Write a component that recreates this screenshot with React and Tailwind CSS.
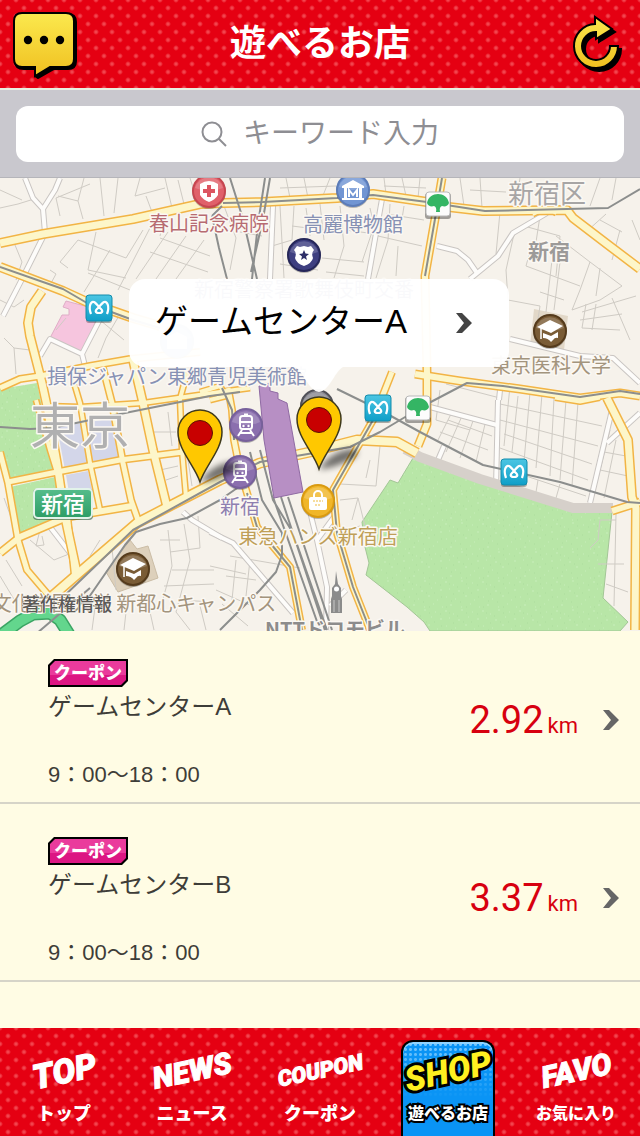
import React, { useState } from "react";

const shops = [
    { id: 1, name: "ゲームセンターA", hours: "9：00〜18：00", distance: "2.92" },
    { id: 2, name: "ゲームセンターB", hours: "9：00〜18：00", distance: "3.37" },
];

const tabs = [
    { id: "top", title: "TOP", label: "トップ", titleSize: "text-[34px]", labelSize: "text-[18px]" },
    { id: "news", title: "NEWS", label: "ニュース", titleSize: "text-[30px]", labelSize: "text-[18px]" },
    { id: "coupon", title: "COUPON", label: "クーポン", titleSize: "text-[22px]", labelSize: "text-[18px]" },
    { id: "shop", title: "SHOP", label: "遊べるお店", titleSize: "text-[34px]", labelSize: "text-[16px]" },
    { id: "favo", title: "FAVO", label: "お気に入り", titleSize: "text-[30px]", labelSize: "text-[16px]" },
];

// thin streets
const lanes = [
    "M0 208L18 204L34 199M58 196L78 201L83 219M84 178L78 201M60 216L56 198L90 184M0 190L22 200M100 178L104 216M118 178L114 213M140 178L135 196L165 188M146 196L152 212M165 178L172 208M178 180L184 204M190 178L197 200",
    "M96 232L88 270L126 278M78 240L126 258L143 230M78 240L60 262L68 268M50 270L56 274L50 285M88 273L130 290M110 250L84 292M150 228L118 290M168 232L136 279M186 236L156 279M204 240L176 279M160 238L210 256M150 252L208 272M166 210L160 236M15 245L22 262L16 280",
    "M0 300L14 307L24 300M4 338L14 348L30 350M14 348L16 374M110 300L100 320L124 340M120 314L106 338L98 358M56 330L66 318",
    "M224 206L236 238L230 270M240 232L262 236M280 206L284 278M294 206L292 240L272 246M306 208L310 236M320 204L324 240M340 206L344 246L334 278M292 226L340 232M322 258L364 262M326 272L364 276M370 208L374 226L362 262M345 230L376 234M390 204L388 240L376 278M404 206L400 232M386 214L424 220M378 236L422 246M398 246L396 276M280 264L318 270",
    "M286 178L290 198M304 178L308 198M330 178L322 198M384 178L386 194M402 178L406 196M420 178L418 198M280 188L336 186M384 186L426 188M460 178L464 206M480 178L482 208M520 178L516 206M600 178L590 206M616 178L612 200M470 190L506 192",
    "M500 212L496 254M514 234L506 270L508 300M524 226L560 236L556 276M540 216L536 242M556 236L590 262L622 286M590 262L580 290L572 310M526 266L580 286M532 244L526 266M552 260L546 312M560 262L554 310M540 292L564 300M600 268L596 296M622 286L600 300L572 310M508 300L540 306L535 338M586 304L582 328M596 304L592 330M582 312L636 296M580 320L622 314M582 328L620 330M612 298L630 340M620 230L612 260M632 220L640 240M586 232L606 214M600 220L622 232",
    "M440 390L436 420L470 430M446 384L500 398M452 412L438 440M462 416L446 452M474 418L460 458M486 420L476 462M448 420L492 436M440 432L488 450M510 386L504 446M518 396L512 452M530 392L524 462M542 394L536 468M554 398L550 476M566 400L560 480M578 402L572 486M500 404L602 426M500 420L598 446M504 434L592 464M500 448L588 480M526 476L586 496M536 492L538 480M556 498L560 484M610 430L592 502M616 440L604 498M604 452L626 456M600 470L628 476M616 514L614 606M616 520L600 520L598 540L590 548M598 564L624 564M606 584L628 592",
    "M380 446L376 486L340 484M340 500L358 498L352 520M370 460L366 478M358 498L366 530M346 530L360 526M230 556L300 568M226 576L256 580M236 560L232 600M250 560L246 596M210 566L246 574M216 590L252 606M222 604L248 626",
    "M154 432L176 432M156 446L160 470L178 466M168 412L172 446M190 420L196 446M166 480L178 476M188 460L192 486M40 530L36 546L44 545L42 536M30 540L54 560L74 552M12 520L4 498M6 560L22 586M0 576L18 606M100 540L90 556M112 548L116 590M160 540L180 540M168 530L172 566L160 610M184 524L190 560L176 612M198 516L200 548L170 552M172 570L214 570M164 586L214 584M178 600L214 602M126 612L124 630M150 612L154 630M176 612L190 630M200 606L206 630M96 600L92 630",
];

// white streets with a grey edge
const streets = [
    "M25 178L33 198L43 209L45 233L20 283L3 316",
    "M60 178L55 190L43 209",
    "M40 356L50 339L82 354L100 319M82 354L85 366",
    "M273 206L270 279",
    "M382 199L368 279",
    "M547 213L513 233L498 256L470 279",
    "M437 246L457 251L468 260L477 273",
    "M510 339L580 356L613 358L640 383",
    "M498 400L496 488",
    "M430 407L497 425",
    "M612 410L590 503",
    "M640 413L607 443",
    "M438 460L444 446",
    "M210 532L233 543L293 613",
    "M308 500L312 520L317 540L327 587L326 630M337 513L317 540",
    "M346 590L330 606",
    "M500 390L499 400",
    "M50 527L74 558",
    "M183 512L192 520L222 538",
];

const roads = [
    { d: "M0 243L43 234L133 219L200 204L223 203L263 202L337 198L373 194L427 202L440 206L483 211L567 210L573 218L607 244L640 269", w: 7 },
    { d: "M0 267L63 291L87 302L133 318L160 326", w: 7 },
    { d: "M42 291L31 307L28 323L30 336L42 383L47 406L57 463L65 517L77 573", w: 7 },
    { d: "M0 388L20 379L40 376L90 366L130 359L200 352", w: 5 },
    { d: "M72 376L80 403L90 463L100 510", w: 4 },
    { d: "M103 368L112 403L123 463L131 500L138 520", w: 5 },
    { d: "M133 360L143 403L153 450L167 507", w: 7 },
    { d: "M187 373L180 399L182 450L186 497", w: 4 },
    { d: "M46 406L80 407L143 403L220 392L250 388", w: 4 },
    { d: "M8 482L57 472L120 460L183 452", w: 5 },
    { d: "M0 553L20 537L67 517L132 506", w: 6 },
    { d: "M0 452L8 483L18 540L27 570L50 597", w: 5 },
    { d: "M36 400L50 450L58 476L68 517L74 575", w: 4 },
    { d: "M50 598L80 572L137 523L187 497L220 480L260 463L310 452L357 440L397 442L417 453", w: 8 },
    { d: "M228 388L232 410L234 440L240 470L247 493L257 527L290 567L302 630", w: 5 },
    { d: "M392 372L373 420L333 490L337 533L353 587L370 630", w: 5 },
    { d: "M442 178L435 219L425 276L427 373L427 406L427 424L418 446", w: 6 },
    { d: "M415 374L460 381L520 389L580 398L620 393L640 396", w: 6 },
    { d: "M607 398L628 440L632 497L636 508L635 630", w: 7 },
    { d: "M612 511L640 502", w: 6 },
    { d: "M533 215L546 208L556 214", w: 2 },
    { d: "M200 392L220 386L226 396L210 400", w: 4 },
    { d: "M555 398L580 402L600 398", w: 3 },
];

const rails = [
    "M223 203L263 202L337 198L373 195L427 202L485 211L567 209L608 208L640 189",
    "M0 267L63 289L87 303L133 320L160 328",
    "M0 427L30 429L52 428L100 418L150 408L210 396L240 392",
    "M60 600L133 530L220 482L260 462L350 447L380 432L427 404L467 383L503 386L580 397L620 391L640 394",
    "M87 600L125 545L136 532L160 524L187 518L220 500L240 486",
    "M36 634L90 588",
    "M230 178L243 219L257 279M270 178L263 219L251 272M265 178L258 224L252 279M212 216L219 248L227 279M212 216L222 206",
    "M337 389L380 410L420 432L483 465L560 482L627 502L640 503",
    "M442 178L435 219L425 276",
    "M260 450L273 500L293 533L327 630M273 497L320 630M281 497L325 630M288 497L332 630",
    "M250 452L262 500L282 533L282 555L276 572L260 590L220 630",
    "M247 493L257 527L290 567L302 630",
    "M384 400L373 420L333 490L337 533L353 587L370 630",
    "M222 388L232 410L234 440",
];

const labels = [
    { text: "春山記念病院", x: 209, y: 231, size: 20, color: "#b76b72" },
    { text: "高麗博物館", x: 353, y: 232, size: 20, color: "#8791b4" },
    { text: "新宿警察署歌舞伎町交番", x: 304, y: 297, size: 20, color: "#6a70a0" },
    { text: "新宿区", x: 547, y: 203, size: 26, color: "#a7a5a5" },
    { text: "新宿", x: 549, y: 259, size: 21, color: "#9c9a99", bold: true },
    { text: "東京医科大学", x: 551, y: 373, size: 20, color: "#a3947d" },
    { text: "損保ジャパン東郷青児美術館", x: 177, y: 384, size: 20, color: "#8791b4" },
    { text: "東京", x: 80, y: 444, size: 50, color: "#b0b0b1" },
    { text: "新宿", x: 240, y: 514, size: 20, color: "#8e7fb0" },
    { text: "東急ハンズ新宿店", x: 318, y: 544, size: 20, color: "#bf9f58" },
    { text: "文化学園大学 新都心キャンパス", x: 134, y: 611, size: 20, color: "#a3947d" },
    { text: "NTTドコモビル", x: 335, y: 637, size: 20, color: "#8d8c8c", bold: true },
];

function Badge({ x, y, color, edge, children }) {
    return (
        <g transform={`translate(${x} ${y})`}>
            <circle cy="1" r="17" fill="#000" opacity=".25" />
            <circle r="16" fill={color} stroke={edge} strokeWidth="2" />
            <path d="M-14 -3A14.500 14.500 0 0 1 14 -3Q0 3 -14 -3Z" fill="#fff" opacity=".18" />
            {children}
        </g>
    );
}

function Train({ x, y }) {
    return (
        <Badge x={x} y={y} color="#8b6fae" edge="#77609b">
            <rect x="-6" y="-9" width="12" height="13" rx="2.500" fill="none" stroke="#fff" strokeWidth="2" />
            <path d="M-5 -3H5M-2 -10.500H2M-4 5L-8 11M4 5L8 11M-6 8H6" stroke="#fff" strokeWidth="2" />
            <circle cx="-2.500" cy="1" r="1.200" fill="#fff" />
            <circle cx="2.500" cy="1" r="1.200" fill="#fff" />
        </Badge>
    );
}

function School({ x, y }) {
    return (
        <Badge x={x} y={y} color="#7a5c36" edge="#553b1c">
            <path d="M-13 -4L0 -11L13 -5L1 2Z" fill="#fff" />
            <path d="M-7 2L1 5L8 1V7Q5 6 3 9L1 11Q-2 7 -7 7Z" fill="#fff" />
            <path d="M-9 -3V8M1 -5L-9 -3" stroke="#fff" strokeWidth="1.500" fill="none" />
        </Badge>
    );
}

// Tokyo Metro
function Metro({ x, y }) {
    return (
        <g transform={`translate(${x} ${y})`}>
            <rect x="-13" y="-12" width="26" height="27" rx="3" fill="#000" opacity=".3" />
            <rect x="-13" y="-13" width="26" height="26" rx="3" fill="url(#metro)" stroke="#138cac" />
            <path
                d="M-8 6C-11 -2 -8 -7 -5 -6C-3 -5 0 -1 2 1C5 4 2 5 0 5C-2 5 -5 4 -2 1C0 -1 3 -5 5 -6C8 -7 11 -2 8 6"
                fill="none"
                stroke="#fff"
                strokeWidth="2.200"
            />
        </g>
    );
}

// Toei line, ginkgo leaf
function Toei({ x, y }) {
    return (
        <g transform={`translate(${x} ${y})`}>
            <rect x="-13" y="-11" width="26" height="26" rx="3" fill="#000" opacity=".35" />
            <rect x="-12" y="-12" width="24" height="24" rx="3" fill="#fcfcfc" stroke="#b9b9b9" />
            <path d="M-11 -1C-9 -13 9 -13 11 -1C10 2 7 3 4 2Q1 3 2 8H-2Q-1 3 -4 2C-7 3 -10 2 -11 -1Z" fill="#34b564" />
        </g>
    );
}

function Pin({ x, y }) {
    return (
        <g transform={`translate(${x} ${y})`}>
            <path d="M0 0Q14 -20 36 -20Q44 -14 24 -6Q10 0 0 0Z" fill="#000" opacity=".55" filter="url(#soft)" />
            <path d="M0 0C-5 -16 -22 -32 -22 -50A22 22 0 0 1 22 -50C22 -32 5 -16 0 0Z" fill="#ffc800" stroke="#3f3a1c" strokeWidth="1.500" />
            <circle cy="-49" r="12.500" fill="#c80000" stroke="#5c1200" strokeWidth="1" />
        </g>
    );
}

function ShopMap() {
    return (
        <svg className="block h-full w-full" viewBox="0 178 640 453" preserveAspectRatio="xMidYMid slice" role="img" aria-label="地図">
            <defs>
                <linearGradient id="metro" x1="0" y1="0" x2="0" y2="1">
                    <stop offset="0" stopColor="#4cc6e3" />
                    <stop offset="1" stopColor="#0f9fc8" />
                </linearGradient>
                <linearGradient id="sign" x1="0" y1="0" x2="0" y2="1">
                    <stop offset="0" stopColor="#55bd8b" />
                    <stop offset="1" stopColor="#2d9d66" />
                </linearGradient>
                <pattern id="grass" width="37" height="29" patternUnits="userSpaceOnUse">
                    <rect width="37" height="29" fill="#b8e6a7" />
                    <path d="M1 2h2M9 5h1M17 1h2M28 3h1M5 9h1M14 11h2M24 8h1M33 10h2M2 17h1M11 19h1M21 16h2M30 20h1M6 25h2M17 27h1M26 24h1M35 27h1" stroke="#c8eebb" strokeWidth="1" />
                    <path d="M5 4h1M13 7h1M22 4h1M33 5h1M9 14h1M19 13h1M27 13h1M7 21h1M16 22h1M34 17h1M2 27h1M22 27h1" stroke="#addc9d" strokeWidth="1" />
                </pattern>
                <filter id="soft" x="-30%" y="-50%" width="160%" height="200%">
                    <feGaussianBlur stdDeviation="3" />
                </filter>
            </defs>
            <rect y="178" width="640" height="453" fill="#f6f2eb" />

            {/* areas */}
            <path d="M0 389L37 383L47 430L54 473L8 482L0 456Z" fill="url(#grass)" />
            <path d="M10 487L55 477L62 514L20 534Z" fill="url(#grass)" />
            <path d="M413 458L398 483L390 480L362 522L365 547L369 563L366 575L407 607L424 622L430 631H620L628 622L603 598L612 512L573 512L480 482Z" fill="url(#grass)" stroke="#a3c696" />
            <path d="M57 427L115 418L120 459L65 470ZM66 475L88 471L93 494L70 498Z" fill="#d3d6e9" />
            <path d="M66 301L100 310L83 353L50 338L62 315L69 315V309L63 307Z" fill="#f6c5de" stroke="#dfaec6" />
            <path d="M534 309L568 316L564 350L530 346Z" fill="#e2d8c8" />
            <path d="M106 572L130 540L137 549L148 546L158 578L118 592Z" fill="#ddd0bb" stroke="#cbbda6" />

            {/* streets */}
            <g fill="none" stroke="#cfcbc4" strokeWidth="1">
                {lanes.map((d, i) => <path key={i} d={d} />)}
            </g>
            <g fill="none" strokeLinejoin="round">
                <g stroke="#c9c5c2" strokeWidth="6">
                    {streets.map((d, i) => <path key={i} d={d} />)}
                </g>
                <g stroke="#fdfcfa" strokeWidth="4">
                    {streets.map((d, i) => <path key={i} d={d} />)}
                </g>
                <path d="M405 449L420 457L480 479L573 508L613 508" stroke="#d6d0ca" strokeWidth="10" />
                <path d="M0 636L20 621L33 614L50 613L60 620L70 636" stroke="#3ba463" strokeWidth="13" />
                <path d="M0 636L20 621L33 614L50 613L60 620L70 636" stroke="#63d68d" strokeWidth="10" />
                <g stroke="#f2b445">
                    {roads.map((r, i) => <path key={i} d={r.d} strokeWidth={r.w + 3} />)}
                </g>
                <g stroke="#fdf6c9">
                    {roads.map((r, i) => <path key={i} d={r.d} strokeWidth={r.w} />)}
                </g>
                <g stroke="#8c8e8d" strokeWidth="2">
                    {rails.map((d, i) => <path key={i} d={d} />)}
                </g>
            </g>
            <path d="M259 386L270 383V391L278 393V399L287 403L303 492L274 498L264 440Z" fill="#b78fc4" stroke="#8f6aa3" />

            {/* tower */}
            <path d="M336 571L338 584L341 588V596L342 599V613H331V599L332 596V588L335 584Z" fill="#8b8b8b" />
            <path d="M334 600V612M339 600V612" stroke="#c9c9c9" />
            <circle cx="336.500" cy="589" r="2.500" fill="#fff" />

            {/* names */}
            <g textAnchor="middle" stroke="#fbf8f3" strokeWidth="3" strokeLinejoin="round" paintOrder="stroke" className="font-['Noto_Sans_CJK_JP',sans-serif]">
                {labels.map((l) => (
                    <text key={l.text + l.x} x={l.x} y={l.y} fontSize={l.size} fill={l.color} fontWeight={l.bold ? 700 : 400}>{l.text}</text>
                ))}
                <text x="67" y="611" fontSize="18" fill="#5c5a58" strokeWidth="1" fontWeight="500">著作権情報</text>
            </g>

            <rect x="33" y="489" width="60" height="31" rx="4" fill="#26553e" opacity=".6" />
            <rect x="34" y="489" width="58" height="29" rx="4" fill="url(#sign)" stroke="#e2f3ea" strokeWidth="2" />
            <text x="63" y="512" textAnchor="middle" fontSize="22" fontWeight="500" fill="#fff" className="font-['Noto_Sans_CJK_JP',sans-serif]">新宿</text>

            {/* places */}
            <Badge x={209} y={191} color="#e0606a" edge="#c64650">
                <path d="M-9 -7Q0 -13 9 -7V4Q6 9 0 11Q-6 9 -9 4Z" fill="#fff" />
                <path d="M0 -6V6M-6 0H6" stroke="#dc5561" strokeWidth="4" />
            </Badge>
            <Badge x={353} y={190} color="#7195d3" edge="#5c7cb8">
                <path d="M-11 -4L0 -10L11 -4V-2H-11ZM-9 -2H-6V8H-9ZM6 -2H9V8H6ZM-11 8H11V10H-11Z" fill="#fff" />
                <path d="M-4 7V0L0 5L4 0V7" fill="none" stroke="#fff" strokeWidth="2" />
            </Badge>
            <Badge x={304} y={255} color="#3e3f80" edge="#262759">
                <path d="M-7 -9L-4 -8L0 -9L4 -8L7 -9L10 -5Q7 -2 9 3Q8 8 0 11Q-8 8 -9 3Q-7 -2 -10 -5Z" fill="#fff" />
                <path d="M0 -5L1.500 -1.500L5 -1L2 1.500L3 5L0 3L-3 5L-2 1.500L-5 -1L-1.500 -1.500Z" fill="#2d2e68" />
            </Badge>
            <Badge x={177} y={341} color="#9fb4dc" edge="#93a8d0">
                <path d="M-10 -4L0 -9L10 -4V8H-10Z" fill="#fff" />
            </Badge>
            <Badge x={317} y={406} color="#8a8a92" edge="#515158" />
            <Train x={246} y={425} />
            <Train x={240} y={472} />
            <School x={550} y={331} />
            <School x={133} y={569} />
            <Badge x={318} y={501} color="#f0b629" edge="#d99a10">
                <rect x="-9" y="-4" width="18" height="13" rx="2" fill="#fff" />
                <path d="M-4 -3V-6A4 4 0 0 1 4 -6V-3" fill="none" stroke="#fff" strokeWidth="2" />
                <path d="M-5 0H5M-3 4H3" stroke="#eebb3d" strokeWidth="1" strokeDasharray="2 1" />
            </Badge>
            <Metro x={99} y={308} />
            <Metro x={378} y={408} />
            <Metro x={514} y={472} />
            <Toei x={438} y={204} />
            <Toei x={418} y={408} />
            <Pin x={200} y={482} />
            <Pin x={319} y={469} />
        </svg>
    );
}

function Chevron() {
    return (
        <svg width="18" height="22" viewBox="0 0 18 22">
            <path d="M1 1H7L17 11L7 21H1L9 11Z" fill="currentColor" />
        </svg>
    );
}

function CouponBadge() {
    return (
        <span className="block h-7 w-20 bg-black p-[2px] [clip-path:polygon(6px_0,100%_0,100%_22px,74px_100%,0_100%,0_6px)]">
            <span className="flex h-full w-full items-center justify-center bg-linear-to-b from-[#ea3b9c] from-60% to-[#dc1683] to-60% text-[17px] leading-none font-black text-white [clip-path:polygon(5px_0,100%_0,100%_19px,71px_100%,0_100%,0_5px)]">
                クーポン
            </span>
        </span>
    );
}

function ShopPage() {
    const [keyword, setKeyword] = useState("");
    const [tab, setTab] = useState("shop");
    const dots = "bg-[#e50012] bg-[radial-gradient(circle,#f2444e_1px,transparent_3px),radial-gradient(circle,#f2444e_1px,transparent_3px)] bg-size-[16px_16px] bg-position-[0_0,8px_8px]";

    return (
        <div className="flex min-h-screen flex-col bg-[#fffce4] font-['Liberation_Sans','Noto_Sans_CJK_JP',sans-serif]">
            {/* header */}
            <header className={`flex h-[90px] items-center justify-between border-b-2 border-[#e8efe0] px-3 ${dots}`}>
                <button aria-label="メッセージ">
                    <svg width="68" height="70" viewBox="0 0 68 70">
                        <defs>
                            <linearGradient id="gold" x1="0" y1="0" x2="0" y2="1">
                                <stop offset="0" stopColor="#fbe94e" />
                                <stop offset="1" stopColor="#f0c020" />
                            </linearGradient>
                        </defs>
                        <path d="M10 5H56Q64 5 64 13V52Q64 60 56 60H42L26 69L23 67L24 60H12Q3 60 3 52V13Q3 5 10 5Z" fill="#000" stroke="#000" strokeWidth="2" />
                        <path d="M10 4H54Q62 4 62 12V50Q62 58 54 58H38L23 67V58H10Q2 58 2 50V12Q2 4 10 4Z" fill="url(#gold)" stroke="#000" strokeWidth="2" />
                        <circle cx="16" cy="31" r="4.200" />
                        <circle cx="32" cy="31" r="4.200" />
                        <circle cx="48" cy="31" r="4.200" />
                    </svg>
                </button>
                <h1 className="text-[36px] leading-none font-bold text-white">遊べるお店</h1>
                <button aria-label="更新" className="w-[68px]">
                    <svg className="ml-auto" width="64" height="62" viewBox="0 0 64 62">
                        <path d="M54 33A22 22 0 1 1 31 11V4L48 16L32 26V19A14 14 0 1 0 46 33Z" transform="translate(3 3)" fill="#000" stroke="#000" strokeWidth="2" />
                        <path d="M54 33A22 22 0 1 1 31 11V4L48 16L32 26V19A14 14 0 1 0 46 33Z" fill="url(#gold)" stroke="#000" strokeWidth="2" />
                    </svg>
                </button>
            </header>
            {/* header */}
            {/* search */}
            <div className="border-b border-[#b5b5ba] bg-[#c9c8ce] px-4 pt-4 pb-[15px]">
                <label className="flex h-14 items-center justify-center gap-4 rounded-xl bg-white text-[#8e8e93]">
                    <svg width="26" height="26" viewBox="0 0 26 26" fill="none" stroke="currentColor" strokeWidth="2">
                        <circle cx="11" cy="11" r="9.500" />
                        <path d="M17.500 17.500L25 25" />
                    </svg>
                    <input
                        className="w-[196px] text-[28px] outline-none placeholder:text-[#8e8e93]"
                        aria-label="キーワード入力"
                        placeholder="キーワード入力"
                        value={keyword}
                        onChange={(e) => setKeyword(e.target.value)}
                    />
                </label>
            </div>
            {/* search */}
            {/* map */}
            <section className="relative z-10 -mb-[5px] h-[453px] overflow-hidden">
                <ShopMap />
                <button className="absolute top-[101px] left-1/2 flex h-[88px] w-[380px] -translate-x-[191px] items-center justify-between rounded-2xl bg-white/96 pr-9 pl-[26px] text-[33px] leading-none text-black">
                    <span className="pb-1">ゲームセンターA</span>
                    <span className="text-[#444]"><Chevron /></span>
                    <svg className="absolute top-full left-[166px]" width="48" height="25" viewBox="0 0 48 25">
                        <path d="M0 0H48Q44 2 38 12Q30 25 24 25Q18 25 10 12Q4 2 0 0Z" fill="#fff" fillOpacity=".97" />
                    </svg>
                </button>
            </section>
            {/* map */}
            {/* shop list */}
            <ul className="flex-1 text-[#3e3d38]">
                {shops.map((shop) => (
                    <li key={shop.id} className="border-b-2 border-[#d6d4c8]">
                        <a href={`#shop-${shop.id}`} className="flex h-44 items-center pt-3 pr-5 pl-12">
                            <div className="flex-1 pt-1.5">
                                <CouponBadge />
                                <p className="mt-2 text-[24px] leading-6">{shop.name}</p>
                                <p className="mt-11 text-[22px] leading-6">{shop.hours}</p>
                            </div>
                            <p className="mr-6 flex items-baseline gap-1 font-['Roboto',sans-serif] text-[#d7000f]">
                                <span className="text-[38px]">{shop.distance}</span>
                                <span className="text-[22px]">km</span>
                            </p>
                            <span className="text-[#666]"><Chevron /></span>
                        </a>
                    </li>
                ))}
            </ul>
            {/* shop list */}
            {/* tab bar */}
            <nav className={`grid h-[108px] grid-cols-5 pt-3 ${dots}`}>
                {tabs.map((t) => (
                    <button
                        key={t.id}
                        onClick={() => setTab(t.id)}
                        className={`mx-auto flex h-24 w-[94px] flex-col items-center rounded-t-xl border-2 border-b-0 text-white ${
                            tab === t.id
                                ? "border-black bg-[#0a94f5] bg-[linear-gradient(transparent,#0a94f5_60%),radial-gradient(circle,#7cc8fb_1px,transparent_2px)] bg-size-[100%_100%,5px_5px] shadow-[inset_0_2px_0_#8fd4ff]"
                                : "border-transparent"
                        }`}
                    >
                        <span
                            className={`flex h-[58px] -rotate-12 items-center font-['Roboto',sans-serif] leading-none font-black italic ${t.titleSize} ${
                                tab === t.id ? "text-[#fff020] [-webkit-text-stroke:6px_#000] [paint-order:stroke_fill]" : "[-webkit-text-stroke:1px_#fff]"
                            }`}
                        >
                            {t.title}
                        </span>
                        <span
                            className={`leading-7 font-black whitespace-nowrap ${t.labelSize} ${
                                tab === t.id ? "[-webkit-text-stroke:4px_#000] [paint-order:stroke_fill]" : ""
                            }`}
                        >
                            {t.label}
                        </span>
                    </button>
                ))}
            </nav>
            {/* tab bar */}
        </div>
    );
}

export default ShopPage;
